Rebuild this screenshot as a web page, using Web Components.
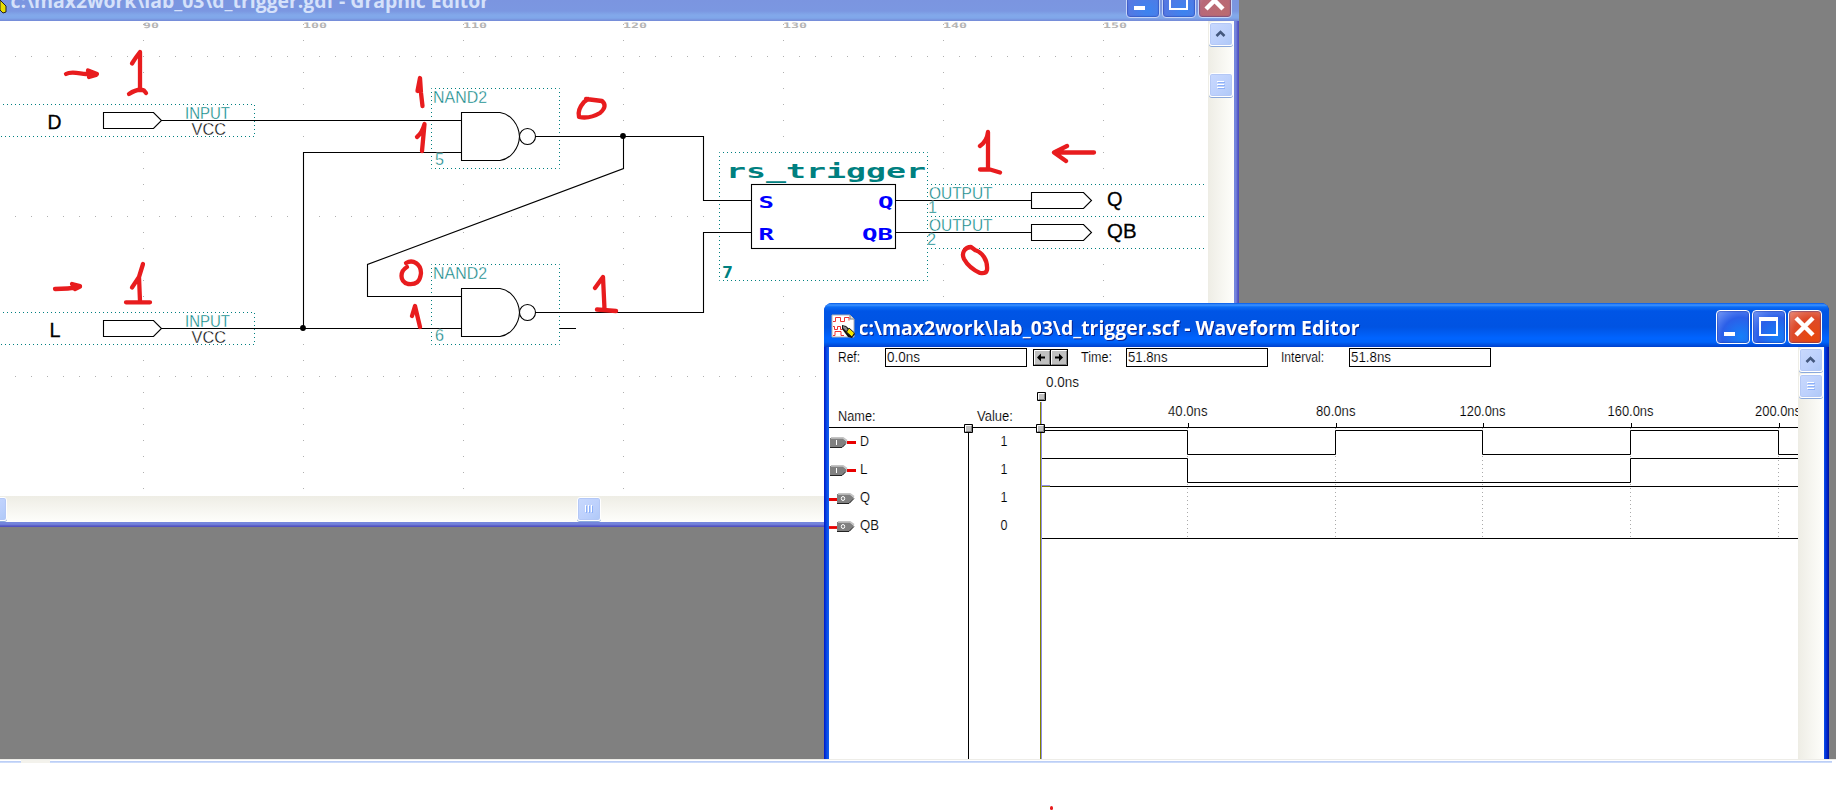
<!DOCTYPE html>
<html lang="en">
<head>
<meta charset="utf-8">
<title>Digital lab: D trigger</title>
<style>
html,body{margin:0;height:100%}
body{width:1836px;height:810px;overflow:hidden;background:#fff;font-family:"Liberation Sans",Arial,sans-serif}
</style>
</head>
<body>
<lab-desktop></lab-desktop>
<script>
const make = (name, html, init) => customElements.define(name, class extends HTMLElement {
  connectedCallback() {
    if (this.shadowRoot) return;
    this.attachShadow({mode: 'open'}).innerHTML = html(this);
    if (init) init(this);
  }
});

/* one line of text, fitted to a given width */
const t = (x, y, w, s, size = 14, extra = '') =>
  `<text x="${x}" y="${y}" textLength="${w}" lengthAdjust="spacingAndGlyphs" font-size="${size}" ${extra}>${s}</text>`;

make('xp-caption-button', el => {
  const k = el.getAttribute('kind');
  const glyph = {
    min: '<rect x="8" y="22" width="11" height="4" fill="#fff"/>',
    max: '<path d="M7 7h19v19H7z M9 11v13h15V11z" fill="#fff" fill-rule="evenodd"/>',
    close: '<path d="M8 8L25 25M25 8L8 25" stroke="#fff" stroke-width="4.4"/>'
  }[k];
  return `<style>
:host{display:block;width:34px;height:34px;box-sizing:border-box;border:1px solid var(--rim,#fff);border-radius:4px;
background:${k === 'close' ? 'var(--close,radial-gradient(circle at 70% 80%,#e8480c,#dd4a2a 55%,#ea9280))' : 'var(--blue,radial-gradient(circle at 75% 80%,#1480fa,#2b5fe8 55%,#7a9cf6))'};
box-shadow:inset 0 0 1px 1px rgba(20,40,150,.35)}
svg{display:block;margin:-1px}</style><svg width="34" height="34">${glyph}</svg>`;
});

make('xp-scroll-piece', el => {
  const k = el.getAttribute('kind');
  const g = {
    up: '<path d="M7.5 14l4-4 4 4" fill="none" stroke="#44587e" stroke-width="2.6"/>',
    grip: '<path d="M8 8.500h7M8 11.500h7M8 14.500h7" stroke="#fff"/><path d="M9 9.500h7M9 12.500h7M9 15.500h7" stroke="#8cb0f8"/>',
    vgrip: '<path d="M8.500 8v7M11.500 8v7M14.500 8v7" stroke="#fff"/><path d="M9.500 9v7M12.500 9v7M15.500 9v7" stroke="#8cb0f8"/>', none: ''
  }[k];
  return `<style>:host{display:block;flex:none;width:24px;height:24px;box-sizing:border-box;border:1px solid #fff;border-radius:3px;
background:linear-gradient(135deg,#c9d9fe,#bcd0fc 60%,#aec8f7);box-shadow:inset 0 0 0 1px #b4c8f6,0 1px 0 #8ba9dc}
svg{display:block;margin:-1px}</style><svg width="24" height="24">${g}</svg>`;
});

make('waveform-icon', () => `<style>:host{display:block;width:25px;height:25px}svg{display:block}</style>
<svg width="25" height="25" viewBox="0 0 25 25"><path d="M1 1h18l4 4v18H1z" fill="#fff" stroke="#b0b0b0"/><path d="M19 1v4h4" fill="#ddd" stroke="#808080"/>
<path d="M2 7.500h2.500v-4h5v4h4v-4h4.500v3M2 12.500h1.500v3h3v-3h3v3h2M2 21.500h2v-4h6v4h3" fill="none" stroke="#f03030"/>
<path d="M11 11l4 1 9 8-3 4-4-1-6-8z" fill="#111"/><path d="M12 12l3 1 2 3-2 1-3-3z" fill="#888"/><path d="M15.500 18l2.500-4 5.500 5-2.500 4z" fill="#f2e800" stroke="#222"/></svg>`);

make('schematic-sheet', () => {
  let dots = '';
  for (let x = 143; x < 1208; x += 160) for (let y = 24; y < 496; y += 16) dots += `M${x} ${y - 20.5}h1`;
  for (let y = 56; y < 496; y += 160) for (let x = 15; x < 1208; x += 16) dots += `M${x} ${y - 20.5}h1`;
  const box = (x, y, w, h) => `<rect x="${x}.5" y="${y}.5" width="${w}" height="${h}" fill="#fff" stroke="#008080" stroke-dasharray="1 3" stroke-dashoffset=".5"/>`;
  const pin = (x, y, w) => `<path d="M${x}.5 ${y}.500h${w}l8 8-8 8H${x}.5z"/>`;
  const gate = y => `<path d="M461.500 ${y}.500H500C511 ${y + 2} 519 ${y + 13} 519.500 ${y + 24.5}C519 ${y + 36} 511 ${y + 47} 500 ${y + 48.5}H461.500z" fill="#fff"/><circle cx="527.500" cy="${y + 24.5}" r="8" fill="#fff"/>`;
  const C = 'fill="#008080"', thin = 'stroke="#fff" stroke-width=".35"', T = C + ' ' + thin;
  const M = 'font-family="DejaVu Sans Mono" font-weight="bold"';
  const B = M + ' fill="#0000ff"', P = 'stroke="#000" stroke-width=".3"';
  const marks = [90,100,110,120,130,140,150].map((n, i) => t(143 + i * 160, 27.5, n < 100 ? 16 : 24, n, 7.5, M + ' fill="#b4b4b4"')).join('');
  return `<style>:host{display:block;flex:1;min-width:0;overflow:hidden}svg{display:block}</style>
<svg width="1208" height="475" viewBox="0 21 1208 475"><rect y="21" width="1208" height="475" fill="#fff"/>
<g transform="translate(0 21)"><path d="${dots}" stroke="#b0b0b0"/></g>${marks}
${box(-4,104,259,32)}${box(-4,312,259,32)}${box(431,88,128,80)}${box(431,264,128,80)}${box(927,184,300,32)}${box(927,216,300,32)}${box(719,152,208,128)}
<rect x="1207" y="180" width="1" height="74" fill="#fff"/>
<g fill="none" stroke="#000" stroke-width="1.100">
<path d="M161 120.500H461M461 152.500H303.500V328.500M161 328.500H461M536 136.500H703.500V200.500H751.500M623.500 136.500V168.500L367.500 264.500V296.500H461M536 312.500H703.500V232.500H751.500M559.500 328.500H576M895.500 200.500H1031.500M895.500 232.500H1031.500"/>
${pin(103,112,50)}${pin(103,320,50)}${pin(1031,192,52)}${pin(1031,224,52)}${gate(112)}${gate(288)}
<rect x="751.500" y="184.500" width="144" height="64" fill="#fff"/></g>
<circle cx="623" cy="136" r="2.900"/><circle cx="303" cy="328" r="2.900"/>
${t(185,118.7,45,'INPUT',16.4,T)}${t(191.5,135.2,34.5,'VCC',16.4,thin)}${t(185,326.7,45,'INPUT',16.4,T)}${t(191.5,343.2,34.5,'VCC',16.4,thin)}
${t(47.5,128.5,14,'D',20,P)}${t(49.5,336.5,11,'L',20,P)}
${t(433,103,54,'NAND2',16.4,T)}${t(435,164.5,9,'5',16.4,T)}${t(433,279,54,'NAND2',16.4,T)}${t(435,341,9,'6',16.4,T)}
${t(726,177.5,200,'rs_trigger',20,M + ' ' + C)}
${t(758.5,208,15.5,'S',15,B)}${t(758.5,240,15.5,'R',15,B)}${t(878,208,15.5,'Q',15,B)}${t(862,240,31,'QB',15,B)}${t(722,278,11,'7',15,M + ' ' + C)}
${t(929,199,63.5,'OUTPUT',16.4,T)}${t(929,231,63.5,'OUTPUT',16.4,T)}${t(928,213,9,'1',16.4,T)}${t(927,245,9,'2',16.4,T)}
${t(1107,206.3,15.5,'Q',20,P)}${t(1107,238.3,29.5,'QB',20,P)}
<g fill="none" stroke="#e81c1e" stroke-width="4.300" stroke-linecap="round" stroke-linejoin="round">
<path d="M66 74C71 71 79 73.500 86 74H97L88 70.500L96 75L89 77M132 63.500Q136 57 140 52V90M129 94Q138 88 144 90.500L146 93"/>
<path d="M55 289C65 288.500 74 289 80 286L72 284L80 286.500L75 289M132 287.500L139 277L143 264L139 277L140 301M126 302.300H150"/>
<path d="M417.500 91L420 78L421 93L422.500 106M417 137Q422 133 424.500 124L422 151"/>
<path d="M586 99L602 101Q608 106 600 113Q590 119 579 117Q577 110 584 102L588 99"/>
<path d="M406 263C413 259 421 264 421 273C420 282 416 285 408 284C399 281 400 271 407 267"/>
<path d="M412 316L415 306L420 327M595 288L603 277L604.500 309M597 309.500L616 311"/>
<path d="M980 146Q987 141 988 132V169M980 169.500H990L1000 172.500M1094 152.500H1054L1067 146M1054 152.500L1066 161"/>
<path d="M975 250L971 247C965 247 961 253 964 259Q969 268 980 273Q986 274 987 270C988 260 982 252 975 250"/></g></svg>`;
});

make('graphic-editor', () => `<style>
:host{display:flex;flex-direction:column;width:1239px;height:527px;box-sizing:border-box;background:linear-gradient(#7485dc 524px,#6a74d2 525px,#5252c0 526px);
--rim:#c6d4f8;--blue:radial-gradient(circle at 65% 80%,#3c84f0,#5578e2 60%,#829cec);--close:radial-gradient(circle at 70% 80%,#bb6b70,#b86878 60%,#d0a0b0)}
header{display:flex;height:21px;flex:none;background:linear-gradient(#7b95e0 0,#7b97e1 11px,#82a8ea 15px,#80a7ea 18px,#7489d6);justify-content:space-between}
header svg{display:block}nav{display:flex;gap:2px;padding-right:7px;margin-top:-16px}
main{display:flex;height:475px;padding-right:5px;background:linear-gradient(90deg,#7485dc 1236px,#5050c0 1238px)}
.v{width:26px;background:linear-gradient(90deg,#eeede5,#fefefb);display:flex;flex-direction:column;align-items:center;padding-top:1px;box-sizing:border-box;gap:27px}
.h{height:26px;flex:none;margin-right:5px;display:flex;padding-top:1px;box-sizing:border-box;background:linear-gradient(#eeede5,#fefefb);gap:570px}
.h :first-child{margin-left:-17px}
</style><header><svg width="600" height="21"><path d="M0 0L6 6V12L3 13L0 10z" fill="#e8dc00" stroke="#222"/>
${t(10.5,8,478.5,'c:\\max2work\\lab_03\\d_trigger.gdf - Graphic Editor',20,'font-family="Open Sans" font-weight="bold" fill="#d5e1fa"')}</svg>
<nav><xp-caption-button kind="min"></xp-caption-button><xp-caption-button kind="max"></xp-caption-button><xp-caption-button kind="close"></xp-caption-button></nav></header>
<main><schematic-sheet></schematic-sheet><div class="v"><xp-scroll-piece kind="up"></xp-scroll-piece><xp-scroll-piece kind="grip"></xp-scroll-piece></div></main>
<div class="h"><xp-scroll-piece kind="none"></xp-scroll-piece><xp-scroll-piece kind="vgrip"></xp-scroll-piece></div>`);

make('waveform-view', () => {
  const edges = [1187.5, 1335.5, 1482.5, 1630.5, 1778.5];
  const handle = (x, y) => `<path d="M${x}.5 ${y}.500h8v8h-8z" fill="#c0c0c0" stroke="#000"/><path d="M${x + 1}.5 ${y + 7}V${y + 1}.500h5.500" stroke="#fff" fill="none"/><path d="M${x + 2} ${y + 7}.500h5.500V${y + 2}" stroke="#808080" fill="none"/>`;
  const inPin = y => `<path d="M830 ${y + 1}h13l4 4-4 5h-13z" fill="#808080"/><path d="M831 ${y + .8}h12l4 3" stroke="#c4c4c4" stroke-width="1.800" fill="none"/><path d="M830 ${y + 10.5}h12l4-4" stroke="#222" fill="none"/><path d="M836.500 ${y + 3}v5" stroke="#fff"/><path d="M847 ${y + 5.5}h9" stroke="#e80000" stroke-width="2.800"/>`;
  const outPin = y => `<path d="M829 ${y + 6.5}h8" stroke="#e80000" stroke-width="2.800"/><path d="M837 ${y + 1}h13l4 4-4 5h-13z" fill="#808080"/><path d="M838 ${y + .8}h12l4 3" stroke="#c4c4c4" stroke-width="1.800" fill="none"/><path d="M837 ${y + 10.5}h12l5-5" stroke="#222" fill="none"/><ellipse cx="843" cy="${y + 5.5}" rx="1.700" ry="2" fill="none" stroke="#fff"/>`;
  const field = x => `<rect x="${x}.5" y="348.500" width="141" height="18" fill="#fff" stroke="#000"/>`;
  const arrow = (x, d) => `<rect x="${x}.5" y="349.500" width="17" height="16" fill="#c0c0c0" stroke="#000"/><path d="M${x + 1}.5 364V350.500h15" stroke="#fff" fill="none"/><path d="M${x + 2} 364.500h14.500V351" stroke="#808080" fill="none"/><path d="${d}"/>`;
  return `<style>:host{display:block;width:969px;overflow:hidden}svg{display:block}text{stroke:#fff;stroke-width:.15px}</style>
<svg width="969" height="412" viewBox="829 347 969 412"><rect x="829" y="347" width="969" height="412" fill="#fff"/>
${t(838,362,22,'Ref:')}${field(885)}${t(887,362,33,'0.0ns')}
${arrow(1033,'M1037 357.500l4-4v3h4v2h-4v3z')}${arrow(1050,'M1063 357.500l-4-4v3h-4v2h4v3z')}
${t(1081,362,31,'Time:')}${field(1126)}${t(1128,362,39.5,'51.8ns')}${t(1281,362,43,'Interval:')}${field(1349)}${t(1351,362,40,'51.8ns')}
${t(1046,387,33,'0.0ns')}${t(838,421,37.5,'Name:')}${t(977,421,36,'Value:')}
${[['40.0ns',1168,39.5],['80.0ns',1316,39.5],['120.0ns',1459.5,46],['160.0ns',1607.5,46],['200.0ns',1755,46]].map(a => t(a[1],416,a[2],a[0])).join('')}
<path d="${edges.map(x => `M${x} 428V538`).join('')}" stroke="#aaa" stroke-dasharray="1 3"/>
<g fill="none" stroke="#000"><path d="M829 427.500H1798M968.500 433V759${edges.map(x => `M${x + 1} 423v4`).join('')}"/>
<path d="M1041 430.500H1187.500V454.500H1335.500V430.500H1482.500V454.500H1630.500V430.500H1778.500V454.500H1798M1041 458.500H1187.500V482.500H1630.500V458.500H1798M1041 486.500H1798M1041 538.500H1798"/></g>
<path d="M1040.500 402V759M1042 486.500h8" stroke="#808000"/><path d="M1041.500 402V759M1042 485.500h8" stroke="#9090e8"/>
${handle(1037,392)}${handle(964,424)}${handle(1036,424)}${inPin(437)}${inPin(465)}${outPin(493)}${outPin(521)}
${t(860,446,9,'D')}${t(860,474,7.5,'L')}${t(860,502,10,'Q')}${t(860,530,19,'QB')}
${t(1000.5,446,7,'1')}${t(1000.5,474,7,'1')}${t(1000.5,502,7,'1')}${t(1000.5,530,7,'0')}</svg>`;
});

make('waveform-editor', () => `<style>
:host{display:flex;flex-direction:column;width:1005px;height:456px;box-sizing:border-box;overflow:hidden;border-radius:8px 8px 0 0;background:linear-gradient(90deg,#0019c8,#0a50e8 3px,#1560f0 5px,#0a50e8 1000px,#0030d8 1002px,#0010a0)}
header{display:flex;align-items:center;height:44px;flex:none;box-sizing:border-box;padding:3px 7px 0;gap:4px;background:linear-gradient(#0058e8 0,#3f94ff 2px,#0a6cf5 4px,#0055e6 8px,#0053e2 24px,#0064ff 35px,#0064fa 39px,#0040cc 44px)}
.title{display:block;flex:1}.title text{filter:drop-shadow(1px 1px 0 #0a2490)}nav{display:flex;gap:2px}
main{display:flex;flex:1;margin:0 5px}
.v{width:26px;flex:none;background:linear-gradient(90deg,#eeede5,#fefefb);display:flex;flex-direction:column;align-items:center;gap:2px;padding-top:1px;box-sizing:border-box}
waveform-icon{flex:none}
</style><header><waveform-icon></waveform-icon><svg class="title" height="44">${t(-1.5,29.5,501,'c:\\max2work\\lab_03\\d_trigger.scf - Waveform Editor',20,'font-family="Open Sans" font-weight="bold" fill="#fff"')}</svg>
<nav><xp-caption-button kind="min"></xp-caption-button><xp-caption-button kind="max"></xp-caption-button><xp-caption-button kind="close"></xp-caption-button></nav></header>
<main><waveform-view></waveform-view><div class="v"><xp-scroll-piece kind="up"></xp-scroll-piece><xp-scroll-piece kind="grip"></xp-scroll-piece></div></main>`);

make('lab-desktop', () => `<style>
:host{display:flex;flex-direction:column;position:relative;width:1836px;height:810px;overflow:hidden;background:#fff}
.desk{height:759px;flex:none;background:#808080;position:relative}
graphic-editor{position:absolute;left:0;top:0}waveform-editor{position:absolute;left:824px;top:303px}
.edge{display:flex;height:5px;background:#fff;border-top:1px solid #eeede8}
.edge i{display:block;height:2px;margin-top:1px;background:linear-gradient(#b4c8f4,#d5e2fb)}
.edge i:first-child{width:21px}.edge i:last-child{flex:1;margin-right:4px}.edge b{width:29px;height:3px;background:#f3f2ec}
.ink{display:block;width:3px;height:4px;border-radius:2px;background:#e81c1e;margin:41px 0 0 1050px}
</style><div class="desk"><graphic-editor></graphic-editor><waveform-editor></waveform-editor></div><div class="edge"><i></i><b></b><i></i></div><span class="ink"></span>`);
</script>
</body>
</html>
